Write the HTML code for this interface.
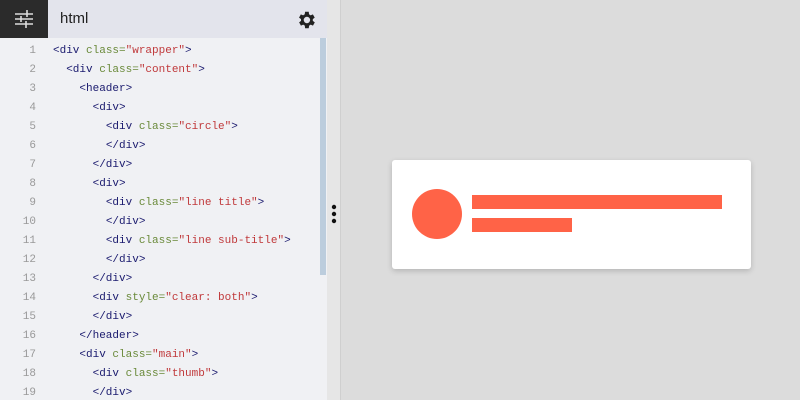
<!DOCTYPE html>
<html><head><style>
html,body{margin:0;width:800px;height:400px;overflow:hidden}
body{background:#dcdcdc;font-family:"Liberation Sans",sans-serif;position:relative}
#left{position:absolute;left:0;top:0;width:327px;height:400px;background:#f0f1f4}
#hdr{position:absolute;left:0;top:0;width:327px;height:38px;background:#e3e4ec}
#dark{position:absolute;left:0;top:0;width:48px;height:38px;background:#2b2b2b}
#title{position:absolute;left:60px;top:10px;font-size:15px;color:#222}
#split{position:absolute;left:327px;top:0;width:13px;height:400px;background:#e6e6e6;border-right:1px solid #cfcfcf}
#sb{position:absolute;left:320px;top:38px;width:6px;height:237px;background:#bccddd}
.code{position:absolute;left:0;top:42px;font-family:"Liberation Mono",monospace;font-size:11px;line-height:19px;white-space:pre}
.n{display:inline-block;width:36px;text-align:right;color:#999;margin-right:17px}
.t{color:#1a1a6e}.a{color:#6a8a3a}.s{color:#c0393b}
#card{position:absolute;left:392px;top:160px;width:359px;height:109px;background:#fff;border-radius:3px;box-shadow:0 2px 6px rgba(0,0,0,.18)}
.o{position:absolute;background:#ff6347}
</style></head><body>
<div id="left"></div>
<div id="hdr"></div>
<div id="dark"><svg width="48" height="38" viewBox="0 0 48 38"><g stroke="#ddd" stroke-width="1.6"><line x1="15" y1="14" x2="33" y2="14"/><line x1="15" y1="19" x2="33" y2="19"/><line x1="15" y1="24" x2="33" y2="24"/><line x1="27" y1="10" x2="27" y2="17"/><line x1="21" y1="16" x2="21" y2="22"/><line x1="26" y1="21" x2="26" y2="28"/></g></svg></div>
<div id="title">html</div>
<svg style="position:absolute;left:295px;top:9px" width="22" height="22" viewBox="0 0 24 24"><path fill="#222" d="M19.4 13a7.5 7.5 0 000-2l2.1-1.6-2-3.5-2.5 1a7.3 7.3 0 00-1.700-1L15 3h-4l-.4 2.9a7.3 7.3 0 00-1.7 1l-2.5-1-2 3.5L6.6 11a7.5 7.5 0 000 2l-2.1 1.6 2 3.5 2.5-1a7.3 7.3 0 001.7 1L11 21h4l.4-2.9a7.3 7.3 0 001.7-1l2.5 1 2-3.5zM13 15.5a3.5 3.5 0 110-7 3.5 3.5 0 010 7z"/></svg>
<div class="code"><span class="n">1</span><span class="t">&lt;div</span> <span class="a">class=</span><span class="s">"wrapper"</span><span class="t">&gt;</span>
<span class="n">2</span>  <span class="t">&lt;div</span> <span class="a">class=</span><span class="s">"content"</span><span class="t">&gt;</span>
<span class="n">3</span>    <span class="t">&lt;header&gt;</span>
<span class="n">4</span>      <span class="t">&lt;div&gt;</span>
<span class="n">5</span>        <span class="t">&lt;div</span> <span class="a">class=</span><span class="s">"circle"</span><span class="t">&gt;</span>
<span class="n">6</span>        <span class="t">&lt;/div&gt;</span>
<span class="n">7</span>      <span class="t">&lt;/div&gt;</span>
<span class="n">8</span>      <span class="t">&lt;div&gt;</span>
<span class="n">9</span>        <span class="t">&lt;div</span> <span class="a">class=</span><span class="s">"line title"</span><span class="t">&gt;</span>
<span class="n">10</span>        <span class="t">&lt;/div&gt;</span>
<span class="n">11</span>        <span class="t">&lt;div</span> <span class="a">class=</span><span class="s">"line sub-title"</span><span class="t">&gt;</span>
<span class="n">12</span>        <span class="t">&lt;/div&gt;</span>
<span class="n">13</span>      <span class="t">&lt;/div&gt;</span>
<span class="n">14</span>      <span class="t">&lt;div</span> <span class="a">style=</span><span class="s">"clear: both"</span><span class="t">&gt;</span>
<span class="n">15</span>      <span class="t">&lt;/div&gt;</span>
<span class="n">16</span>    <span class="t">&lt;/header&gt;</span>
<span class="n">17</span>    <span class="t">&lt;div</span> <span class="a">class=</span><span class="s">"main"</span><span class="t">&gt;</span>
<span class="n">18</span>      <span class="t">&lt;div</span> <span class="a">class=</span><span class="s">"thumb"</span><span class="t">&gt;</span>
<span class="n">19</span>      <span class="t">&lt;/div&gt;</span></div>
<div id="sb"></div>
<div id="split"></div>
<svg style="position:absolute;left:331px;top:204px" width="6" height="20"><circle cx="3" cy="3" r="2.2" fill="#111"/><circle cx="3" cy="10" r="2.2" fill="#111"/><circle cx="3" cy="17" r="2.2" fill="#111"/></svg>
<div id="card">
<div class="o" style="left:20px;top:29px;width:50px;height:50px;border-radius:50%"></div>
<div class="o" style="left:80px;top:35px;width:250px;height:14px"></div>
<div class="o" style="left:80px;top:58px;width:100px;height:14px"></div>
</div>
</body></html>
